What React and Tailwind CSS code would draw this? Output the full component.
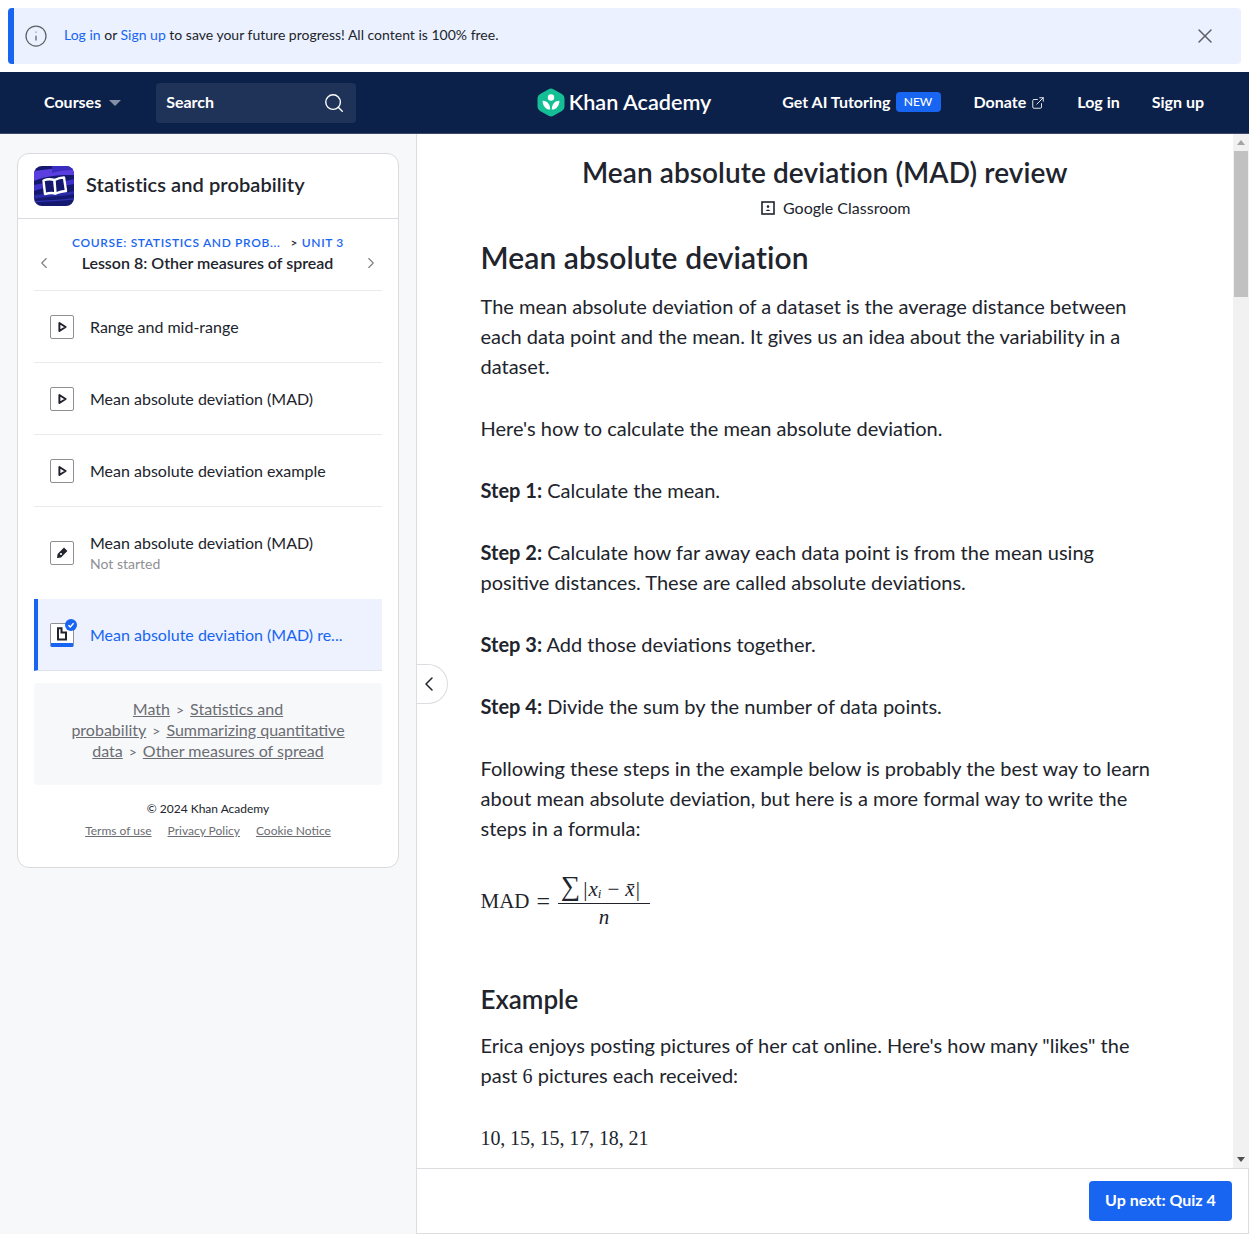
import { ChevronLeft, ChevronRight, Search, X, Info, ExternalLink } from "lucide-react";

const lessons = [
  { title: "Range and mid-range", icon: "play" },
  { title: "Mean absolute deviation (MAD)", icon: "play" },
  { title: "Mean absolute deviation example", icon: "play" },
  { title: "Mean absolute deviation (MAD)", icon: "pencil", sub: "Not started" },
];

function Logo() {
  return (
    <svg width="28" height="29" viewBox="0 0 28 29">
      <path
        d="M11.6 1.2 a5 5 0 0 1 4.8 0 L24.9 6 a5 5 0 0 1 2.6 4.3 V18.7 a5 5 0 0 1 -2.6 4.3 L16.4 27.8 a5 5 0 0 1 -4.8 0 L3.1 23 a5 5 0 0 1 -2.6 -4.3 V10.3 a5 5 0 0 1 2.6 -4.3 Z"
        fill="#14bf96"
      />
      <circle cx="14" cy="9.5" r="3.2" fill="#fff" />
      <path d="M5.6 12.8 C9.8 12.8 13.2 15.8 13.2 21.6 C8.8 21.6 5.6 18 5.6 12.8 Z" fill="#fff" />
      <path d="M22.4 12.8 C18.2 12.8 14.8 15.8 14.8 21.6 C19.2 21.6 22.4 18 22.4 12.8 Z" fill="#fff" />
    </svg>
  );
}

function CourseIcon() {
  return (
    <svg width="40" height="40" viewBox="0 0 40 40" className="shrink-0 rounded-lg">
      <rect width="40" height="40" fill="#14186f" />
      <path d="M0 5 L40 0 V9 C28 9 14 9 0 15 Z" fill="#5a3ee0" />
      <path d="M18 0 H40 V4 C32 4 24 5 18 7 Z" fill="#3a2cc0" />
      <path d="M0 19 C12 16 26 17 40 13 V18 C26 21 12 20 0 25 Z" fill="#3f30c8" />
      <path d="M0 29 C12 27 26 28 40 25 V28 C26 31 12 30 0 33 Z" fill="#2a2aa8" />
      <path d="M0 35 C12 34 26 34 40 32 V33.5 C26 35 12 35.5 0 36.5 Z" fill="#3033b0" />
      <path d="M9.5 14.5 C13 13 17 13 20.5 14 L21.5 27.5 C18 26.5 14.5 27 11 28 Z" fill="#14186f" stroke="#fff" strokeWidth="2.4" strokeLinejoin="round" />
      <path d="M20.5 14 C23.5 12.5 27 11.5 30 11.5 L32 25 C28.5 25.3 25 26.2 21.5 27.5 Z" fill="#14186f" stroke="#fff" strokeWidth="2.4" strokeLinejoin="round" />
    </svg>
  );
}

function LessonIcon({ type }) {
  return (
    <span className="flex h-6 w-6 shrink-0 items-center justify-center rounded-[2px] border border-[#8f9094] bg-white">
      {type === "play" ? (
        <svg width="12" height="12" viewBox="0 0 12 12">
          <path d="M3.4 2 L9.6 6 L3.4 10 Z" fill="none" stroke="#21242c" strokeWidth="2" strokeLinejoin="round" />
        </svg>
      ) : (
        <svg width="14" height="14" viewBox="0 0 14 14">
          <path d="M9 1.6 L12.4 5 L6 11.4 L2 12 L2.6 8 Z" fill="#21242c" />
          <circle cx="6" cy="8" r="1.1" fill="#fff" />
        </svg>
      )}
    </span>
  );
}

function ArticleIcon() {
  return (
    <span className="relative h-6 w-6 shrink-0 rounded-[2px] border border-b-[4px] border-[#8f9094] border-b-[#1865f2] bg-white">
      <svg width="12" height="14" viewBox="0 0 12 14" className="absolute left-[5px] top-[3px]">
        <path d="M2 1.2 H5.5 V5.5 H10 V12.5 H2 Z" fill="none" stroke="#21242c" strokeWidth="2" />
      </svg>
      <span className="absolute -right-[4px] -top-[5px] flex h-[12px] w-[12px] items-center justify-center rounded-full bg-[#1865f2]">
        <svg width="8" height="8" viewBox="0 0 8 8">
          <path d="M1.4 4.2 L3.3 6 L6.6 2.2" fill="none" stroke="#fff" strokeWidth="1.5" />
        </svg>
      </span>
    </span>
  );
}

function Sidebar() {
  return (
    <aside className="w-[417px] shrink-0 border-r border-[#dcdde0] bg-[#f7f8fa] pl-[17px] pt-[19px]">
      <div className="h-[715px] w-[382px] rounded-xl border border-[#dadbde] bg-white">
        <div className="flex h-[65px] items-center gap-3 border-b border-[#dadbde] pl-4">
          <CourseIcon />
          <span className="mb-1 text-[20px] font-semibold tracking-[0.08px] text-[#21242c]">Statistics and probability</span>
        </div>
        <div className="px-4">
          <div className="h-[72px] border-b border-[#ebebec] pt-[15px]">
            <div className="flex justify-center gap-[10px] text-[12px] font-semibold leading-[18px] tracking-[0.65px] text-[#1865f2]">
              <span>COURSE: STATISTICS AND PROB...</span>
              <span><span className="text-[#21242c]">&gt;</span> UNIT 3</span>
            </div>
            <div className="flex items-center">
              <ChevronLeft size={18} strokeWidth={1.5} className="ml-[1px] shrink-0 text-[#7d7f84]" />
              <div className="flex-1 text-center text-[16px] font-semibold leading-[21px] text-[#21242c]">Lesson 8: Other measures of spread</div>
              <ChevronRight size={18} strokeWidth={1.5} className="mr-[2px] shrink-0 text-[#7d7f84]" />
            </div>
          </div>

          {lessons.map((l) => (
            <div
              key={l.title + l.icon}
              className={`flex items-center gap-4 pl-4 text-[16px] text-[#21242c] ${l.sub ? "h-[92px]" : "h-[72px] border-b border-[#ebebec]"}`}
            >
              <LessonIcon type={l.icon} />
              <div>
                <div className="leading-[21px]">{l.title}</div>
                {l.sub && <div className="text-[14px] leading-[21px] text-[#8f9094]">{l.sub}</div>}
              </div>
            </div>
          ))}

          <div className="flex h-[72px] items-center gap-4 border-b border-[#dfe3ee] border-l-[4px] border-l-[#1865f2] bg-[#edf2fe] pl-3 text-[16px] text-[#1865f2]">
            <ArticleIcon />
            <span>Mean absolute deviation (MAD) re...</span>
          </div>

          <div className="mt-3 h-[102px] rounded-[4px] bg-[#f7f8fa] px-4 pt-[15px] text-center text-[16px] leading-[21px] text-[#6b6d73]">
            <span className="underline">Math</span>
            <span className="mx-[6px] text-[14px] leading-none">&gt;</span>
            <span className="underline">Statistics and probability</span>
            <span className="mx-[6px] text-[14px] leading-none">&gt;</span>
            <span className="underline">Summarizing quantitative data</span>
            <span className="mx-[6px] text-[14px] leading-none">&gt;</span>
            <span className="underline">Other measures of spread</span>
          </div>

          <div className="mt-[14px] text-center text-[12px] leading-[20px] text-[#21242c]">© 2024 Khan Academy</div>
          <div className="mt-[2px] flex justify-center gap-4 text-[12px] leading-[20px] text-[#6b6d73] underline">
            <span>Terms of use</span>
            <span>Privacy Policy</span>
            <span>Cookie Notice</span>
          </div>
        </div>
      </div>
    </aside>
  );
}

function Formula() {
  return (
    <div className="mb-[49px] flex h-[62px] items-center font-['Liberation_Serif',serif] text-[21px] text-[#21242c]">
      <span>MAD</span>
      <span className="ml-[7px] mr-[8px] text-[24px] leading-none">=</span>
      <span className="flex w-[92px] flex-col items-center">
        <span className="flex h-[32px] w-full items-end gap-[3px] border-b border-[#21242c] pl-[3px] leading-none">
          <span className="mb-[3px] text-[27px] leading-none">∑</span>
          <span className="mb-[1px] flex items-center whitespace-nowrap text-[21px] leading-[26px]">
            <span>|</span>
            <i className="ml-[1px]">x</i>
            <i className="mt-[8px] text-[13px] leading-none">i</i>
            <span className="mx-[6px]">−</span>
            <i>x̄</i>
            <span className="ml-[1px]">|</span>
          </span>
        </span>
        <i className="h-[26px] text-[21px] leading-[26px]">n</i>
      </span>
    </div>
  );
}

function Article() {
  const serif = "font-['Liberation_Serif',serif]";
  return (
    <div className="min-w-0 flex-1 overflow-hidden pl-[63.5px] pr-[75px] pt-[18px] text-[20px] leading-[30px] text-[#21242c]">
      <h1 className="-mr-[11px] text-center text-[28px] font-semibold leading-[40px] tracking-[0.08px]">Mean absolute deviation (MAD) review</h1>
      <div className="-mr-[11px] mt-[4px] flex items-center justify-center gap-[8px] pl-[22px] text-[16px] leading-[24px]">
        <svg width="14" height="14" viewBox="0 0 14 14">
          <rect x="1" y="1" width="12" height="12" fill="none" stroke="#21242c" strokeWidth="1.6" />
          <circle cx="7" cy="5.6" r="1.3" fill="#21242c" />
          <path d="M4.6 10 Q7 7 9.4 10 Z" fill="#21242c" />
        </svg>
        <span>Google Classroom</span>
      </div>

      <h2 className="mt-[17px] text-[30px] font-semibold leading-[40px] tracking-[0.08px]">Mean absolute deviation</h2>
      <p className="mb-8 mt-[14px]">
        The mean absolute deviation of a dataset is the average distance between each data point and the mean. It gives us an idea about the variability in a dataset.
      </p>
      <p className="mb-8">Here's how to calculate the mean absolute deviation.</p>
      <p className="mb-8"><b>Step 1:</b> Calculate the mean.</p>
      <p className="mb-8"><b>Step 2:</b> Calculate how far away each data point is from the mean using positive distances. These are called absolute deviations.</p>
      <p className="mb-8"><b>Step 3:</b> Add those deviations together.</p>
      <p className="mb-8"><b>Step 4:</b> Divide the sum by the number of data points.</p>
      <p className="mb-[27px]">Following these steps in the example below is probably the best way to learn about mean absolute deviation, but here is a more formal way to write the steps in a formula:</p>
      <Formula />
      <h3 className="text-[26px] font-semibold leading-[36px]">Example</h3>
      <p className="mb-8 mt-[13px]">
        Erica enjoys posting pictures of her cat online. Here's how many "likes" the past <span className={serif}>6</span> pictures each received:
      </p>
      <p className={`${serif} tracking-[-0.1px]`}>10, 15, 15, 17, 18, 21</p>
    </div>
  );
}

export default function App() {
  return (
    <div className="flex h-screen flex-col overflow-hidden bg-white font-['Lato',sans-serif] text-[#21242c]">
      <div className="mx-2 mt-2 flex h-14 shrink-0 items-center rounded-[4px] border-l-[6px] border-l-[#1865f2] bg-[#ebf1fe] pl-[10px] pr-[24px]">
        <Info size={24} strokeWidth={1.25} className="text-[#5f6166]" />
        <p className="mb-1 ml-4 flex-1 text-[14px]">
          <span className="text-[#1865f2]">Log in</span> or <span className="text-[#1865f2]">Sign up</span> to save your future progress! All content is 100% free.
        </p>
        <X size={24} strokeWidth={1.5} className="text-[#5f6166]" />
      </div>

      <nav className="mt-2 flex h-[62px] shrink-0 items-center border-b border-[#3b4a6b] bg-[#0c2149] text-[16px] font-bold text-white">
        <div className="flex flex-1 items-center pl-[44px]">
          <span className="mb-[2px]">Courses</span>
          <span className="ml-2 h-0 w-0 border-x-[6px] border-t-[6px] border-x-transparent border-t-[#8590a6]" />
          <div className="ml-[35px] flex h-10 w-[200px] items-center justify-between rounded-[4px] bg-[#1f3258] pl-[10px] pr-[11px]">
            <span className="mb-[2px]">Search</span>
            <Search size={22} strokeWidth={1.5} />
          </div>
        </div>
        <div className="flex items-center gap-1 text-[21.6px] font-semibold">
          <Logo />
          <span>Khan Academy</span>
        </div>
        <div className="flex flex-1 items-center justify-end pr-[45px]">
          <span className="mb-[2px]">Get AI Tutoring</span>
          <span className="mb-[2px] ml-[5px] flex h-5 w-[45px] items-center justify-center rounded-[4px] bg-[#1865f2] text-[12px] font-medium">NEW</span>
          <span className="mb-[2px] ml-[33px]">Donate</span>
          <ExternalLink size={14} strokeWidth={1.5} className="ml-[5px]" />
          <span className="mb-[2px] ml-8">Log in</span>
          <span className="mb-[2px] ml-8">Sign up</span>
        </div>
      </nav>

      <div className="flex min-h-0 flex-1">
        <Sidebar />
        <main className="relative flex min-w-0 flex-1 flex-col bg-white">
          <div className="flex min-h-0 flex-1">
            <Article />
            <div className="flex w-4 shrink-0 flex-col items-center bg-[#f1f1f1] py-[6px]">
              <span className="h-0 w-0 border-x-[4px] border-b-[5px] border-x-transparent border-b-[#a3a3a3]" />
              <span className="mt-[6px] h-[146px] w-[14px] bg-[#c1c1c1]" />
              <span className="mt-auto h-0 w-0 border-x-[4px] border-t-[5px] border-x-transparent border-t-[#505050]" />
            </div>
          </div>
          <div className="flex h-[66px] shrink-0 items-center justify-end border border-l-0 border-[#dcdde0] bg-white pr-4">
            <button className="h-10 w-[143px] rounded-[4px] bg-[#1865f2] pb-[2px] text-[16px] font-bold text-white">Up next: Quiz 4</button>
          </div>
          <button className="absolute left-0 top-[530px] flex h-10 w-[31px] items-center justify-center rounded-r-full border border-l-0 border-[#dcdde0] bg-white text-[#21242c]">
            <ChevronLeft size={24} strokeWidth={1.5} className="-ml-[6px]" />
          </button>
        </main>
      </div>
    </div>
  );
}
